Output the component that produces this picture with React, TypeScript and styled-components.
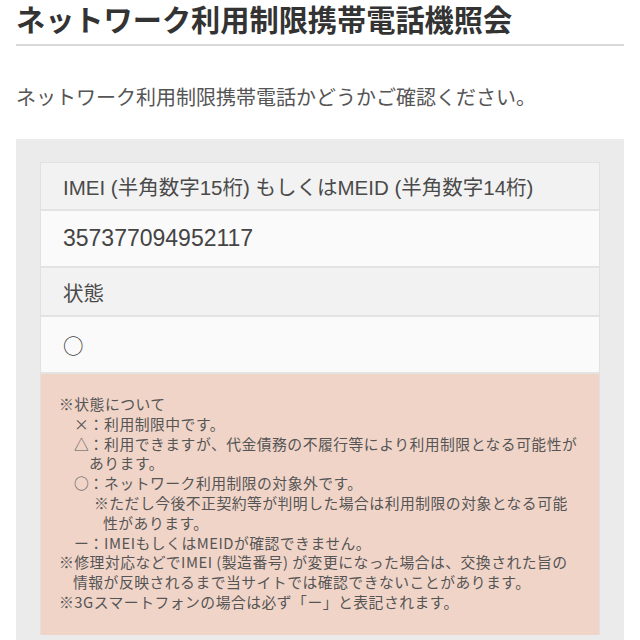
import React from "react";
import styled, { createGlobalStyle } from "styled-components";

const Global = createGlobalStyle`
  html, body { margin: 0; padding: 0; background: #ffffff; }
  body {
    font-family: "Noto Sans CJK JP", "Noto Sans", sans-serif;
    color: #333;
    -webkit-font-smoothing: antialiased;
  }
`;

const Page = styled.div`
  padding: 0 16px;
  height: 640px;
  overflow: hidden;
`;

const Title = styled.h1`
  margin: 0;
  padding: 1px 0 9px;
  font-size: 29.2px;
  line-height: 34px;
  font-weight: 700;
  color: #333;
  border-bottom: 2px solid #d9d9d9;
  white-space: nowrap;
`;

const Lead = styled.p`
  margin: 36px 0 27px;
  font-size: 20px;
  line-height: 30px;
  color: #555;
  white-space: nowrap;
`;

const Panel = styled.section`
  background: #ebebeb;
  padding: 23px 24px 8px;
`;

const Table = styled.div`
  display: flex;
  flex-direction: column;
  border: 1px solid #e1e1e1;
  border-bottom: none;
`;

const Row = styled.div<{ $head?: boolean; $h: number; $size?: number; $cjk?: boolean }>`
  box-sizing: border-box;
  display: flex;
  align-items: center;
  height: ${(p) => p.$h}px;
  padding: 0 22px;
  background: ${(p) => (p.$head ? "#f2f2f2" : "#fafafa")};
  border-bottom: 2px solid #e3e3e3;
  font-family: ${(p) =>
    p.$cjk
      ? `"Noto Sans CJK JP", sans-serif`
      : `"Liberation Sans", "Noto Sans CJK JP", sans-serif`};
  font-size: ${(p) => p.$size ?? 20.5}px;
  color: ${(p) => (p.$head ? "#4a4a4a" : "#444")};
  white-space: nowrap;
`;

const Notice = styled.div`
  background: #f0d4c8;
  padding: 20px 18px 23px;
  font-size: 14.8px;
  line-height: 19.8px;
  letter-spacing: 0.5px;
  color: #555;
`;

const Line = styled.div<{ $indent: number }>`
  padding-left: ${(p) => p.$indent}px;
  white-space: nowrap;
`;

const Mark = styled.span`
  display: inline-block;
  width: 1em;
  text-align: center;
`;

export default function App() {
  return (
    <>
      <Global />
      <Page>
        <Title>ネットワーク利用制限携帯電話機照会</Title>
        <Lead>ネットワーク利用制限携帯電話かどうかご確認ください。</Lead>
        <Panel>
          <Table>
            <Row $head $h={48}>IMEI (半角数字15桁) もしくはMEID (半角数字14桁)</Row>
            <Row $h={57} $size={23}>357377094952117</Row>
            <Row $head $h={49}>状態</Row>
            <Row $h={57} $cjk>○</Row>
            <Notice>
              <Line $indent={0}>※状態について</Line>
              <Line $indent={15}>
                <Mark>×</Mark>：利用制限中です。
              </Line>
              <Line $indent={15}>
                <Mark>△</Mark>：利用できますが、代金債務の不履行等により利用制限となる可能性が
              </Line>
              <Line $indent={30}>あります。</Line>
              <Line $indent={15}>
                <Mark>○</Mark>：ネットワーク利用制限の対象外です。
              </Line>
              <Line $indent={35}>※ただし今後不正契約等が判明した場合は利用制限の対象となる可能</Line>
              <Line $indent={44}>性があります。</Line>
              <Line $indent={15}>
                <Mark>ー</Mark>：IMEIもしくはMEIDが確認できません。
              </Line>
              <Line $indent={0}>※修理対応などでIMEI (製造番号) が変更になった場合は、交換された旨の</Line>
              <Line $indent={14}>情報が反映されるまで当サイトでは確認できないことがあります。</Line>
              <Line $indent={0}>※3Gスマートフォンの場合は必ず「ー」と表記されます。</Line>
            </Notice>
          </Table>
        </Panel>
      </Page>
    </>
  );
}
